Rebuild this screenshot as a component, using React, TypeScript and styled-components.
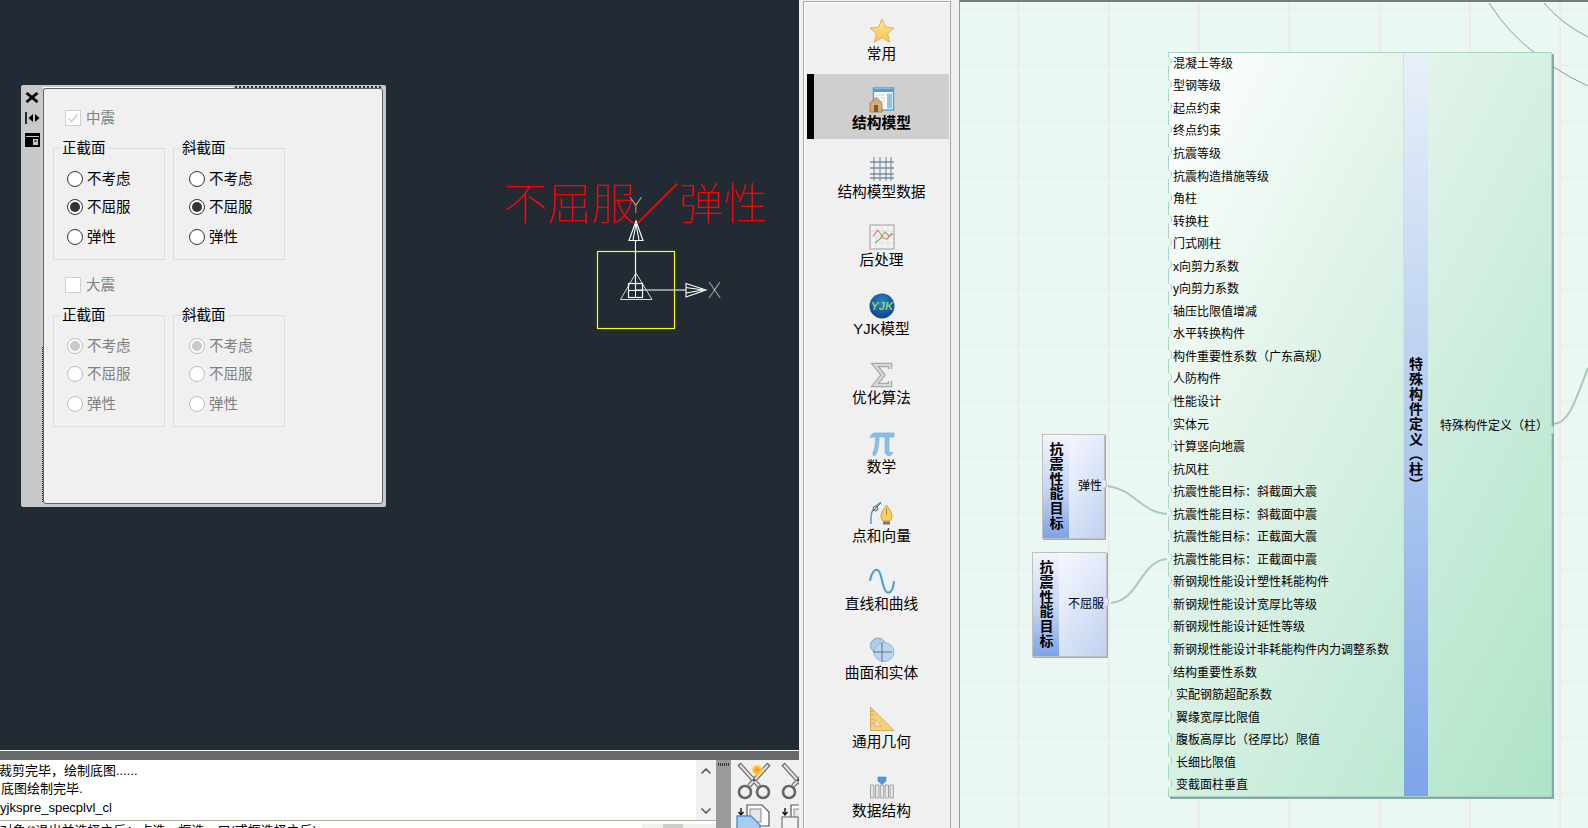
import React from 'react'
import styled, { createGlobalStyle } from 'styled-components'
import { ChevronUp, ChevronDown } from 'lucide-react'

const FONT = `'Liberation Sans', 'Noto Sans CJK SC', sans-serif`

const GlobalStyle = createGlobalStyle`
  html, body { margin: 0; padding: 0; background: #f0f0f0; }
  body { font-family: ${FONT}; color: #000; }
  * { box-sizing: border-box; }
`

const Page = styled.div`
  display: flex;
  width: 1588px;
  height: 828px;
  overflow: hidden;
  background: #f0f0f0;
`

/* ---------- left: CAD viewport ---------- */

const LeftPane = styled.div`
  display: flex;
  flex-direction: column;
  width: 799px;
  flex: none;
`

const Viewport = styled.div`
  position: relative;
  height: 751px;
  flex: none;
  background: #222a33;
  border-bottom: 1px solid #fff;
`

const GrayBand = styled.div`
  height: 9px;
  flex: none;
  background: #696969;
`

const BottomRow = styled.div`
  display: flex;
  flex: 1;
  min-height: 0;
`

const LogColumn = styled.div`
  width: 716px;
  flex: none;
  display: flex;
  flex-direction: column;
  background: #fff;
`

const LogRow = styled.div`
  display: flex;
  height: 61px;
  flex: none;
  border-bottom: 1px solid #b4ae9a;
`

const LogText = styled.div`
  flex: 1;
  padding-top: 2px;
  overflow: hidden;
  font-size: 13px;
  line-height: 18.4px;
  white-space: nowrap;
`

const LogLine = styled.div<{ $shift?: number }>`
  margin-left: ${p => p.$shift ?? 0}px;
`

const LogScroll = styled.div`
  width: 20px;
  flex: none;
  display: flex;
  flex-direction: column;
  justify-content: space-between;
  align-items: center;
  padding: 3px 0 1px;
  background: #f0f0f0;
  color: #606060;
`

const InputRow = styled.div`
  display: flex;
  flex: 1;
  min-height: 0;
  overflow: hidden;
`

const InputText = styled.div`
  flex: 1;
  padding-top: 2px;
  font-size: 13px;
  line-height: 15px;
  white-space: nowrap;
  overflow: hidden;
`

const HScroll = styled.div`
  width: 74px;
  flex: none;
  margin-top: 3px;
  padding-left: 21px;
  background: #f0f0f0;
`

const HThumb = styled.div`
  width: 20px;
  height: 100%;
  background: #cdcdcd;
`

const GripBar = styled.div`
  width: 15px;
  flex: none;
  padding: 3px 2px 0;
  background: #9b9b9b;
`

const GripDots = styled.div`
  height: 3px;
  background: repeating-linear-gradient(to right, #333 0 1px, transparent 1px 2px);
`

const ToolBar = styled.div`
  flex: 1;
  display: grid;
  grid-template-columns: 44px 44px;
  grid-auto-rows: 41px;
  padding: 2px 0 0 5px;
  overflow: hidden;
  background: #f0f0f0;
`

/* ---------- floating dialog ---------- */

const DialogFrame = styled.div`
  position: absolute;
  left: 21px;
  top: 85px;
  width: 365px;
  height: 422px;
  display: flex;
  background: #c8c8c8;
  border-radius: 2px;

  &::before {
    content: '';
    position: absolute;
    left: 22px;
    top: 2px;
    width: 190px;
    height: 1px;
    background: #fff;
  }

  &::after {
    content: '';
    position: absolute;
    left: 21px;
    top: 262px;
    height: 155px;
    border-left: 1px dotted #222;
  }
`

const TopDots = styled.div`
  position: absolute;
  left: 214px;
  right: 5px;
  top: 1px;
  border-top: 2px dotted #333;
`

const DialogStrip = styled.div`
  width: 22px;
  flex: none;
  display: flex;
  flex-direction: column;
  align-items: center;
  gap: 9px;
  padding: 7px 0 0 0;
`

const DialogPanel = styled.div`
  position: relative;
  flex: 1;
  margin: 3px 3.5px 3.5px 0;
  padding: 21px 0 0 9px;
  background: #f0f0f0;
  border: 1px solid #666;
  border-radius: 3px;
  font-size: 14.5px;
  line-height: 16px;
`

const CheckRow = styled.div`
  display: flex;
  align-items: center;
  gap: 5px;
  margin-left: 12px;
  color: #808080;
`

const CheckBox = styled.span`
  display: flex;
  align-items: center;
  justify-content: center;
  width: 16px;
  height: 16px;
  background: #fff;
  border: 1px solid #cfcfcf;
  color: #cccccc;
`

const GroupRow = styled.div`
  display: flex;
  gap: 8px;
  margin: 22px 0 17px;
`

const GroupBox = styled.div<{ $inset: number }>`
  position: relative;
  width: 112px;
  height: 112px;
  padding: 22px 0 0 ${p => p.$inset}px;
  border: 1px solid #dcdcdc;
`

const GroupLegend = styled.span<{ $inset: number }>`
  position: absolute;
  left: ${p => p.$inset}px;
  top: -9px;
  padding: 0 2px;
  background: #f0f0f0;
  color: #000;
`

const RadioRow = styled.div<{ $disabled?: boolean }>`
  display: flex;
  align-items: center;
  gap: 4px;
  height: 16px;
  color: ${p => (p.$disabled ? '#808080' : '#000')};
  margin-bottom: 12px;

  &:nth-of-type(2) {
    margin-bottom: 14px;
  }
`

const RadioDot = styled.span<{ $on?: boolean; $disabled?: boolean }>`
  display: flex;
  align-items: center;
  justify-content: center;
  width: 16px;
  height: 16px;
  flex: none;
  border-radius: 50%;
  background: #fff;
  border: 1px solid ${p => (p.$disabled ? '#bcbcbc' : '#333')};

  &::after {
    content: '';
    display: ${p => (p.$on ? 'block' : 'none')};
    width: 10px;
    height: 10px;
    border-radius: 50%;
    background: ${p => (p.$disabled ? '#c9c9c9' : '#333')};
  }
`

/* ---------- CAD marks ---------- */

const CadLabel = styled.div`
  position: absolute;
  left: 503px;
  top: 172px;
  font-family: 'Noto Sans CJK SC', sans-serif;
  font-size: 44px;
  line-height: 58px;
  font-weight: 100;
  color: #ff0000;
  white-space: nowrap;
`

const CadIcon = styled.svg`
  position: absolute;
  left: 590px;
  top: 190px;
`

const CadAxisText = styled.text`
  font-family: 'Inter', sans-serif;
  font-size: 21px;
  font-weight: 100;
  fill: #ffffff;
`

/* ---------- sidebar ---------- */

const Sidebar = styled.div`
  width: 148px;
  flex: none;
  margin: 1px 8px 0 4px;
  padding: 3px 1px 0 3px;
  display: flex;
  flex-direction: column;
  gap: 3.8px;
  background: #f0f0f0;
  border: 1px solid #a8a8a8;
  border-bottom: 0;
  box-shadow: inset 1px 1px 0 #fff;
`

const NavItem = styled.div<{ $active?: boolean }>`
  height: 65px;
  flex: none;
  display: flex;
  flex-direction: column;
  align-items: center;
  padding-top: 13px;
  background: ${p => (p.$active ? '#cfcfcf' : 'transparent')};
  border-left: 7px solid ${p => (p.$active ? '#000' : 'transparent')};
`

const NavIcon = styled.div`
  width: 26px;
  height: 26px;
  flex: none;
`

const NavLabel = styled.div<{ $active?: boolean }>`
  font-size: 14.7px;
  line-height: 20px;
  white-space: nowrap;
  font-weight: ${p => (p.$active ? 700 : 400)};
`

/* ---------- node canvas ---------- */

const Canvas = styled.div`
  position: relative;
  flex: 1;
  overflow: hidden;
  border-top: 2px solid #7a7a7a;
  border-left: 1px solid #9a9a9a;
  background-color: #ebf7f2;
  background-image:
    linear-gradient(to right, #f1e8e9 1.5px, transparent 1.5px),
    linear-gradient(to bottom, #f1e8e9 1.5px, transparent 1.5px);
  background-size: 90.3px 56px;
  background-position: 57.4px 7px;
`

const WireLayer = styled.svg`
  position: absolute;
  left: 0;
  top: 0;
`

const Node = styled.div<{ $x: number; $y: number; $w: number; $h: number }>`
  position: absolute;
  left: ${p => p.$x - 960}px;
  top: ${p => p.$y - 2}px;
  width: ${p => p.$w}px;
  height: ${p => p.$h}px;
  display: flex;
`

const MainNode = styled(Node)`
  background: linear-gradient(to bottom right, #ffffff 0%, #e2f4ea 35%, #aee3c8 100%);
  border: 1px solid #a9d6c0;
  box-shadow: 2px 2px 0 #8ba5aa;
`

const ParamList = styled.div`
  width: 234px;
  flex: none;
  display: grid;
  grid-auto-rows: 22.56px;
  align-content: start;
  margin-top: -2px;
  font-size: 12px;
`

const ParamRow = styled.div<{ $indent: boolean }>`
  position: relative;
  display: flex;
  align-items: center;
  padding-left: ${p => (p.$indent ? 7 : 4)}px;
  white-space: nowrap;

  &::before {
    content: '';
    position: absolute;
    left: -2px;
    top: 50%;
    width: 4px;
    height: 9px;
    margin-top: -5px;
    background: #ebf7f2;
    border-right: 1px solid #9fcfb8;
    border-radius: 0 5px 5px 0;
  }
`

const MainTitle = styled.div`
  width: 25px;
  flex: none;
  display: flex;
  justify-content: center;
  align-items: center;
  padding: 0 2px 0 0;
  background: linear-gradient(to bottom, #e9f0f9 0%, #b8cff0 45%, #7da4e8 100%);
  border-left: 1px solid #cfe0ea;
  font-size: 14px;
  font-weight: 700;
  line-height: 22px;
  letter-spacing: 1px;
  writing-mode: vertical-rl;
`

const OutputCell = styled.div`
  position: relative;
  flex: 1;
  display: flex;
  align-items: center;
  justify-content: flex-end;
  padding: 0 3px 0 0;
  font-size: 12px;
  white-space: nowrap;
`

const OutputNotch = styled.span`
  position: absolute;
  right: -3px;
  top: 50%;
  width: 4px;
  height: 10px;
  background: #c6ecd9;
  border: 1px solid #a9cfbd;
  border-left: 0;
  border-radius: 0 4px 4px 0;
`

const TargetNode = styled(Node)`
  background: linear-gradient(to bottom right, #ffffff 0%, #e6ecfa 45%, #bfd1f0 100%);
  border: 1.5px solid #c0c0c0;
  box-shadow: 1px 1px 0 #a8a8a8;
`

const TargetTitle = styled.div`
  width: 26px;
  flex: none;
  display: flex;
  justify-content: center;
  align-items: center;
  padding-right: 1px;
  background: linear-gradient(to bottom, #f2f5fd 0%, #c4d4f3 55%, #7da3e7 100%);
  font-size: 14px;
  font-weight: 700;
  line-height: 24px;
  letter-spacing: 0.7px;
  writing-mode: vertical-rl;
`

const TargetOutput = styled(OutputCell)`
  padding-right: 2px;
  padding-bottom: 4px;
`

const TargetNotch = styled(OutputNotch)`
  background: #e4e8f2;
  border-color: #c0c0c0;
  margin-top: -8px;
`

/* ---------- icons ---------- */

const StarIcon = () => (
  <svg width="26" height="26" viewBox="0 0 26 26">
    <defs>
      <linearGradient id="star" x1="0" y1="0" x2="0" y2="1">
        <stop offset="0" stopColor="#ffe694" />
        <stop offset="1" stopColor="#fbc24a" />
      </linearGradient>
    </defs>
    <path d="M13 1 L16.5 9.2 L25 10 L18.6 15.6 L20.6 24.2 L13 19.6 L5.4 24.2 L7.4 15.6 L1 10 L9.5 9.2 Z" fill="url(#star)" stroke="#dfae6a" strokeWidth="1" strokeLinejoin="round" />
  </svg>
)

const ModelIcon = () => (
  <svg width="26" height="26" viewBox="0 0 26 26">
    <rect x="4.5" y="1" width="20" height="22" fill="#fff" stroke="#4b9fd6" strokeWidth="1.4" />
    <rect x="5" y="2" width="19" height="3" fill="#4b9fd6" />
    <rect x="18" y="6.5" width="5" height="15" fill="#8cc3e6" />
    <path d="M7 8h9M7 11h9M7 14h9" stroke="#c6ccd4" strokeWidth="1" />
    <path d="M1 16 L7 10.5 L13 16 V25 H1 Z" fill="#d8ab72" stroke="#9c7a4d" strokeWidth="0.8" />
    <rect x="5" y="18" width="4" height="7" fill="#7c5a30" />
  </svg>
)

const GridIcon = () => (
  <svg width="26" height="26" viewBox="0 0 26 26">
    <path d="M5 1v24M11 1v24M17 1v24M22 1v24" stroke="#7fa6cf" strokeWidth="1.6" opacity="0.85" />
    <path d="M1 6h24M1 12h24M1 18h24M1 22h24" stroke="#7b7b7b" strokeWidth="1.4" opacity="0.85" />
  </svg>
)

const ChartIcon = () => (
  <svg width="26" height="26" viewBox="0 0 26 26">
    <rect x="1" y="1" width="24" height="24" fill="#f3f3f3" stroke="#b4b4b4" strokeWidth="1.4" />
    <path d="M7 2v22M13 2v22M19 2v22M2 7h22M2 13h22M2 19h22" stroke="#dedede" strokeWidth="1" />
    <path d="M4 12 L9 6 L14 14 L18 15 L23 9" fill="none" stroke="#e0897a" strokeWidth="1.2" />
    <path d="M6 19 L11 15 L16 8 L20 12 L24 10" fill="none" stroke="#82b552" strokeWidth="1.2" />
  </svg>
)

const YjkIcon = () => (
  <svg width="26" height="26" viewBox="0 0 26 26">
    <defs>
      <radialGradient id="yjk" cx="0.5" cy="0.35" r="0.7">
        <stop offset="0" stopColor="#2a86c8" />
        <stop offset="1" stopColor="#0a3f80" />
      </radialGradient>
    </defs>
    <circle cx="13" cy="13" r="12.5" fill="url(#yjk)" />
    <text x="13" y="17" textAnchor="middle" fontFamily="'Liberation Sans', sans-serif" fontSize="11.5" fontWeight="700" fontStyle="italic" fill="#8fd06a">YJK</text>
  </svg>
)

const SigmaIcon = () => (
  <svg width="26" height="26" viewBox="0 0 26 26">
    <path d="M21 7 V3 H6 L14 13 L6 23 H21 V19" fill="none" stroke="#a8a8a8" strokeWidth="4.6" strokeLinejoin="miter" />
    <path d="M21 7 V3 H6 L14 13 L6 23 H21 V19" fill="none" stroke="#d9d9d9" strokeWidth="2.2" strokeLinejoin="miter" />
  </svg>
)

const PiIcon = () => (
  <svg width="26" height="26" viewBox="0 0 26 26">
    <path d="M1 7 C2 3 4 2 7 2 H25 V6 H20 V19 C20 22 22 22 24 21 C23 24.5 20.5 25 19 24.5 C16.5 24 16 22 16 19 V6 H10 C10 13 9 21 6 24.5 C4.5 25 3.5 24 4 22 C6 18 6.5 12 6.5 6 C4 6 2.5 6 1 7 Z" fill="#86bfec" stroke="#6aa8dc" strokeWidth="0.6" />
  </svg>
)

const PenIcon = () => (
  <svg width="26" height="26" viewBox="0 0 26 26">
    <path d="M2 24 V17 C2 10 6 7 12 2" fill="none" stroke="#5a9fd0" strokeWidth="1.6" />
    <circle cx="6.5" cy="8.5" r="2.4" fill="#d0d0d0" stroke="#666" strokeWidth="1" />
    <path d="M2 13 L12 3" stroke="#777" strokeWidth="1" />
    <path d="M17.5 5 C20 9 23 12 23 16 C23 18.5 22 20 21 21 H14 C13 20 12 18.5 12 16 C12 12 15 9 17.5 5 Z" fill="#f7cf62" stroke="#c79a3e" strokeWidth="0.9" />
    <path d="M17.5 8v7" stroke="#b08328" strokeWidth="0.9" />
    <rect x="14" y="21.5" width="7" height="3" fill="#777" />
  </svg>
)

const WaveIcon = () => (
  <svg width="26" height="26" viewBox="0 0 26 26">
    <path d="M1 12 C3 4 6 1 8.5 2 C12 3.2 12.5 12 14.5 18 C16 23.5 18 25 20 24.5 C22.5 24 24 21 25 14" fill="none" stroke="#4ea2d2" strokeWidth="2.2" strokeLinecap="round" />
  </svg>
)

const SolidIcon = () => (
  <svg width="26" height="26" viewBox="0 0 26 26">
    <circle cx="9" cy="8.5" r="7.5" fill="#a9cdee" stroke="#9a9a9a" strokeWidth="0.9" />
    <ellipse cx="15" cy="15" rx="10" ry="9.5" fill="#b6d6f2" stroke="#8eb2d2" strokeWidth="0.9" />
    <path d="M13 6v19M4 15h19" stroke="#666" strokeWidth="0.9" />
  </svg>
)

const SquareIcon = () => (
  <svg width="26" height="26" viewBox="0 0 26 26">
    <path d="M1.5 1 L25 24.5 H1.5 Z M6 13.5 V20 H12.5 Z" fill="#f5cf7e" fillRule="evenodd" stroke="#d4a44f" strokeWidth="0.9" />
    <path d="M1.5 5h3M1.5 9h3M1.5 13h3M1.5 17h3" stroke="#c09340" strokeWidth="0.7" />
  </svg>
)

const DataIcon = () => (
  <svg width="26" height="26" viewBox="0 0 26 26">
    <path d="M1.5 10h3.4v13H1.5zM6.5 10h3.4v13H6.5zM11.3 10h3.4v13h-3.4zM16.1 10h3.4v13h-3.4zM21 10h3.4v13H21z" fill="#e6e6e6" stroke="#a4a4a4" strokeWidth="1" />
    <path d="M9 2 H17 V6 L13 9.5 L9 6 Z" fill="#4f97d8" stroke="#3c7fbe" strokeWidth="0.6" />
  </svg>
)

const ScissorsIcon = ({ glow }: { glow?: boolean }) => (
  <svg width="36" height="38" viewBox="0 0 36 38">
    <defs>
      <radialGradient id="spark">
        <stop offset="0" stopColor="#ff8a1e" />
        <stop offset="0.55" stopColor="#ffc02e" />
        <stop offset="1" stopColor="#fff3a0" stopOpacity="0.2" />
      </radialGradient>
    </defs>
    <path d="M3 2 L23 24 M33 2 L13 24" stroke="#6e6e6e" strokeWidth="4.6" />
    <path d="M4 3 L23 24 M32 3 L13 24" stroke="#e2e2e2" strokeWidth="2.2" />
    <circle cx="9" cy="30" r="6" fill="#f0f0f0" stroke="#666" strokeWidth="2.6" />
    <circle cx="27" cy="30" r="6" fill="#f0f0f0" stroke="#666" strokeWidth="2.6" />
    <circle cx="18" cy="18" r="1.5" fill="#444" />
    {glow && <circle cx="21" cy="8" r="6.5" fill="url(#spark)" />}
  </svg>
)

const PasteIcon = ({ blue }: { blue?: boolean }) => (
  <svg width="36" height="30" viewBox="0 0 36 30">
    <path d="M11 2 H26 L33 9 V23 H11 Z" fill="#fff" stroke="#555" strokeWidth="1.2" />
    <rect x="14" y="6" width="11" height="13" fill="#e6e6e6" stroke="#888" strokeWidth="1" />
    <path d="M5 5 V11 M2.5 9 L5 12 L7.5 9" fill="none" stroke="#111" strokeWidth="1.4" />
    {blue
      ? <path d="M1 13 H15 L24 22 V34 H1 Z" fill="#a6cdf0" stroke="#4f8fca" strokeWidth="1.4" />
      : <rect x="2" y="14" width="16" height="18" fill="#f2f2f2" stroke="#777" strokeWidth="1.2" />}
  </svg>
)

const CheckMark = () => (
  <svg width="12" height="12" viewBox="0 0 12 12">
    <path d="M1.5 6.5 L4.5 9.5 L10.5 2.5" fill="none" stroke="currentColor" strokeWidth="1.6" />
  </svg>
)

const CloseGlyph = () => (
  <svg width="14" height="11" viewBox="0 0 14 11">
    <path d="M1.5 1 L12.5 10 M12.5 1 L1.5 10" stroke="#000" strokeWidth="2.8" />
  </svg>
)

const DockGlyph = () => (
  <svg width="15" height="12" viewBox="0 0 15 12">
    <path d="M1 0v12" stroke="#000" strokeWidth="1.6" />
    <path d="M8 2 L3.5 6 L8 10 Z M10 2 L14.5 6 L10 10 Z" fill="#000" />
  </svg>
)

const PanelGlyph = () => (
  <svg width="15" height="14" viewBox="0 0 15 14">
    <path d="M0 0H15V14H0Z M1 3V4H14V3Z M8 6V12H13V6Z" fill="#000" fillRule="evenodd" />
    <path d="M9.5 8H11.5" stroke="#000" strokeWidth="1.4" />
  </svg>
)

/* ---------- data ---------- */

const navItems = [
  { label: '常用', Icon: StarIcon },
  { label: '结构模型', Icon: ModelIcon, active: true },
  { label: '结构模型数据', Icon: GridIcon },
  { label: '后处理', Icon: ChartIcon },
  { label: 'YJK模型', Icon: YjkIcon },
  { label: '优化算法', Icon: SigmaIcon },
  { label: '数学', Icon: PiIcon },
  { label: '点和向量', Icon: PenIcon },
  { label: '直线和曲线', Icon: WaveIcon },
  { label: '曲面和实体', Icon: SolidIcon },
  { label: '通用几何', Icon: SquareIcon },
  { label: '数据结构', Icon: DataIcon },
]

const params = [
  '混凝土等级', '型钢等级', '起点约束', '终点约束', '抗震等级', '抗震构造措施等级', '角柱', '转换柱', '门式刚柱',
  'x向剪力系数', 'y向剪力系数', '轴压比限值增减', '水平转换构件', '构件重要性系数（广东高规）', '人防构件', '性能设计',
  '实体元', '计算竖向地震', '抗风柱', '抗震性能目标：斜截面大震', '抗震性能目标：斜截面中震', '抗震性能目标：正截面大震',
  '抗震性能目标：正截面中震', '新钢规性能设计塑性耗能构件', '新钢规性能设计宽厚比等级', '新钢规性能设计延性等级',
  '新钢规性能设计非耗能构件内力调整系数', '结构重要性系数', '实配钢筋超配系数', '翼缘宽厚比限值',
  '腹板高厚比（径厚比）限值', '长细比限值', '变截面柱垂直',
]

const radioOptions = ['不考虑', '不屈服', '弹性']

const Group = ({ title, picked, disabled, legend, inset }: {
  title: string
  picked: number
  disabled?: boolean
  legend: number
  inset: number
}) => (
  <GroupBox $inset={inset}>
    <GroupLegend $inset={legend}>{title}</GroupLegend>
    {radioOptions.map((o, i) => (
      <RadioRow key={o} $disabled={disabled}>
        <RadioDot $on={i === picked} $disabled={disabled} />
        {o}
      </RadioRow>
    ))}
  </GroupBox>
)

export default function App() {
  return (
    <Page>
      <GlobalStyle />
      <LeftPane>
        <Viewport>
          <CadLabel>不屈服／弹性</CadLabel>
          <CadIcon width="145" height="145" viewBox="590 190 145 145">
            <rect x="597.5" y="251.5" width="77" height="77" fill="none" stroke="#ffff00" strokeWidth="1.2" />
            <path d="M635.5 290V240M636 290H686" stroke="#fff" strokeWidth="1.2" />
            <path d="M629 240.5H643L636 221Z M633 240 L636 224 L639 240" fill="none" stroke="#fff" strokeWidth="1.1" />
            <path d="M686 283.5V297L706 290Z M686 287.5L703 290L686 293" fill="none" stroke="#fff" strokeWidth="1.1" />
            <path d="M620.5 299.5H652L636 273Z" fill="none" stroke="#d8d8d8" strokeWidth="1" />
            <rect x="628.5" y="283.5" width="14" height="14" fill="none" stroke="#fff" strokeWidth="1.2" />
            <path d="M635.5 283V297M628 290.5H643" stroke="#fff" strokeWidth="1" />
            <CadAxisText x="629" y="213">Y</CadAxisText>
            <CadAxisText x="708" y="298">X</CadAxisText>
          </CadIcon>
          <DialogFrame>
            <TopDots />
            <DialogStrip>
              <CloseGlyph />
              <DockGlyph />
              <PanelGlyph />
            </DialogStrip>
            <DialogPanel>
              <CheckRow>
                <CheckBox><CheckMark /></CheckBox>
                中震
              </CheckRow>
              <GroupRow>
                <Group title="正截面" picked={1} legend={6} inset={13} />
                <Group title="斜截面" picked={1} legend={6} inset={15} />
              </GroupRow>
              <CheckRow>
                <CheckBox />
                大震
              </CheckRow>
              <GroupRow>
                <Group title="正截面" picked={0} legend={6} inset={13} disabled />
                <Group title="斜截面" picked={0} legend={6} inset={15} disabled />
              </GroupRow>
            </DialogPanel>
          </DialogFrame>
        </Viewport>
        <GrayBand />
        <BottomRow>
          <LogColumn>
            <LogRow>
              <LogText>
                <LogLine $shift={-1}>裁剪完毕，绘制底图......</LogLine>
                <LogLine $shift={1}>底图绘制完毕.</LogLine>
                <LogLine>yjkspre_specplvl_cl</LogLine>
              </LogText>
              <LogScroll>
                <ChevronUp size={16} strokeWidth={2.6} />
                <ChevronDown size={16} strokeWidth={2.6} />
              </LogScroll>
            </LogRow>
            <InputRow>
              <InputText>对象(*退出并选择之后：点选，框选，口(或框选择之后)</InputText>
              <HScroll><HThumb /></HScroll>
            </InputRow>
          </LogColumn>
          <GripBar><GripDots /></GripBar>
          <ToolBar>
            <ScissorsIcon glow />
            <ScissorsIcon />
            <PasteIcon blue />
            <PasteIcon />
          </ToolBar>
        </BottomRow>
      </LeftPane>

      <Sidebar>
        {navItems.map(({ label, Icon, active }) => (
          <NavItem key={label} $active={active}>
            <NavIcon><Icon /></NavIcon>
            <NavLabel $active={active}>{label}</NavLabel>
          </NavItem>
        ))}
      </Sidebar>

      <Canvas>
        <WireLayer width="628" height="826" viewBox="960 2 628 826">
          <g fill="none" stroke="#8b9a9a" strokeWidth="1">
            <path d="M1489 3 Q1510 35 1535 53" />
            <path d="M1544 3 Q1562 24 1588 37" />
            <path d="M1552 66 Q1570 78 1588 86" />
          </g>
          <g fill="none" stroke="#a8cbb8" strokeWidth="2">
            <path d="M1108 486 C1135 490 1140 512 1168 514" />
            <path d="M1111 603 C1140 600 1140 560 1168 559" />
            <path d="M1553 424 C1570 424 1577 395 1588 368" />
          </g>
        </WireLayer>
        <TargetNode $x={1042} $y={434} $w={63} $h={105}>
          <TargetTitle>抗震性能目标</TargetTitle>
          <TargetOutput>弹性<TargetNotch /></TargetOutput>
        </TargetNode>
        <TargetNode $x={1032} $y={552} $w={75} $h={105}>
          <TargetTitle>抗震性能目标</TargetTitle>
          <TargetOutput>不屈服<TargetNotch /></TargetOutput>
        </TargetNode>
        <MainNode $x={1168} $y={52} $w={384} $h={745}>
          <ParamList>
            {params.map((p, i) => (
              <ParamRow key={p} $indent={i >= 28}>{p}</ParamRow>
            ))}
          </ParamList>
          <MainTitle>特殊构件定义（柱）</MainTitle>
          <OutputCell>
            特殊构件定义（柱）
            <OutputNotch />
          </OutputCell>
        </MainNode>
      </Canvas>
    </Page>
  )
}
